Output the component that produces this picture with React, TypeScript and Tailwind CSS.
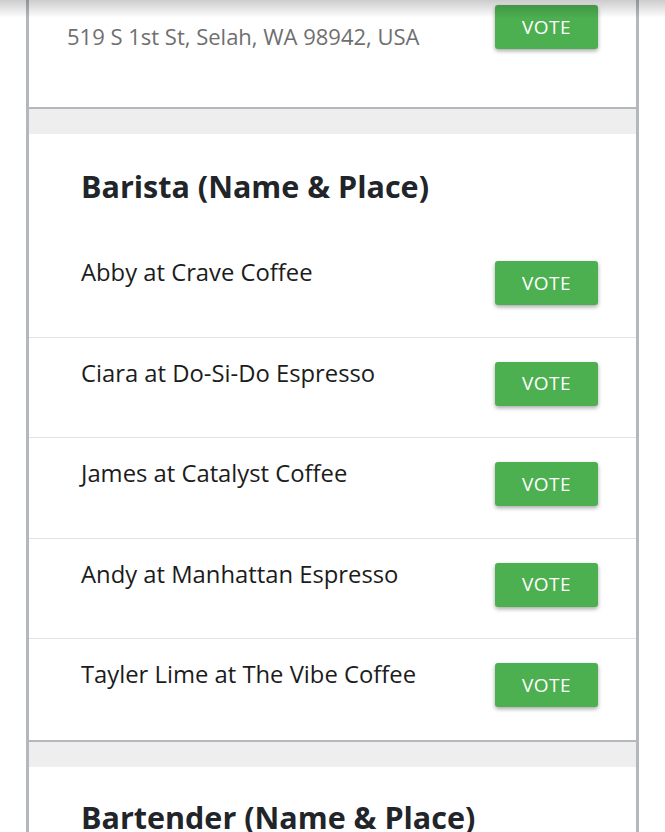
const baristas = [
  "Abby at Crave Coffee",
  "Ciara at Do-Si-Do Espresso",
  "James at Catalyst Coffee",
  "Andy at Manhattan Espresso",
  "Tayler Lime at The Vibe Coffee",
];

function VoteButton() {
  return (
    <button className="flex h-[44px] w-[103px] shrink-0 items-center justify-center rounded-[3px] bg-[#4caf50] text-[19px] tracking-[0.5px] text-white shadow-[0_2px_4px_rgba(0,0,0,0.35)]">
      VOTE
    </button>
  );
}

function Band() {
  return <div className="h-[27px] border-t-2 border-[#b4b8bc] bg-[#eeeeee]" />;
}

export default function App() {
  return (
    <div
      className="relative h-[832px] overflow-hidden bg-white"
      style={{ fontFamily: '"Open Sans", "Noto Sans", sans-serif' }}
    >
      <div className="pointer-events-none absolute inset-x-0 top-0 z-10 h-[18px] bg-gradient-to-b from-black/20 to-transparent" />
      <div className="mx-[26px] border-x-[3px] border-[#b4b8bc]">
        {/* previous entry, cut off */}
        <div className="flex h-[107px] items-start justify-between pl-[38px] pr-[38px]">
          <p className="pt-[20px] text-[22px] leading-[32px] text-[#6f6f6f]">
            519 S 1st St, Selah, WA 98942, USA
          </p>
          <div className="pt-[5px]">
            <VoteButton />
          </div>
        </div>
        <Band />

        <div className="bg-white">
          <h2 className="px-[52px] pt-[32px] text-[30.5px] font-bold leading-[40px] text-[#212529]">
            Barista (Name &amp; Place)
          </h2>
          <div className="mt-[31px]">
            {baristas.map((name, i) => (
              <div
                key={name}
                className={`flex h-[100.5px] items-start justify-between pl-[52px] pr-[38px] ${
                  i < baristas.length - 1 ? "border-b border-[#e2e2e2]" : ""
                }`}
              >
                <p className="pt-[19px] text-[23.8px] leading-[32px] text-[#1c1c1c]">
                  {name}
                </p>
                <div className="pt-[24px]">
                  <VoteButton />
                </div>
              </div>
            ))}
          </div>
        </div>
        <Band />

        <div className="bg-white">
          <h2 className="px-[52px] pt-[30px] text-[30.5px] font-bold leading-[40px] text-[#212529]">
            Bartender (Name &amp; Place)
          </h2>
        </div>
      </div>
    </div>
  );
}
